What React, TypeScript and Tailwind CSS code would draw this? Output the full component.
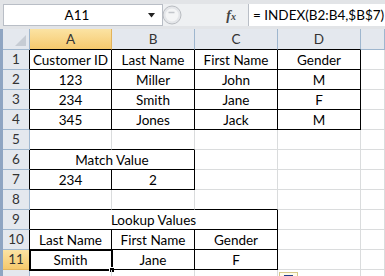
import React from 'react'

type Cell = { t?: string; span?: number }

const cols = ['A', 'B', 'C', 'D', '']

const rows: Cell[][] = [
  [{ t: 'Customer ID' }, { t: 'Last Name' }, { t: 'First Name' }, { t: 'Gender' }, {}],
  [{ t: '123' }, { t: 'Miller' }, { t: 'John' }, { t: 'M' }, {}],
  [{ t: '234' }, { t: 'Smith' }, { t: 'Jane' }, { t: 'F' }, {}],
  [{ t: '345' }, { t: 'Jones' }, { t: 'Jack' }, { t: 'M' }, {}],
  [{}, {}, {}, {}, {}],
  [{ t: 'Match Value', span: 2 }, {}, {}, {}],
  [{ t: '234' }, { t: '2' }, {}, {}, {}],
  [{}, {}, {}, {}, {}],
  [{ t: 'Lookup Values', span: 3 }, {}, {}],
  [{ t: 'Last Name' }, { t: 'First Name' }, { t: 'Gender' }, {}, {}],
  [{ t: 'Smith' }, { t: 'Jane' }, { t: 'F' }, {}, {}],
  [{}, {}, {}, {}, {}],
]

// cells that carry the black outline
function boxed(r: number, c: number) {
  if (r >= 1 && r <= 4 && c <= 3) return true
  if (r >= 6 && r <= 7 && c <= 1) return true
  if (r >= 9 && r <= 11 && c <= 2) return true
  return false
}

const font = { fontFamily: 'Lato, "Open Sans", sans-serif' }

function FormulaBar() {
  return (
    <div className="flex h-[29px] items-start bg-[#e2e4e7] pt-[4px]">
      <div className="ml-[3px] flex h-[22px] w-[160px] items-center border border-[#b9bec6] bg-white">
        <span className="flex-1 pl-[2px] text-center text-[13.5px] text-black">A11</span>
        <svg width="8" height="5" viewBox="0 0 8 5" className="mr-[6px]">
          <path d="M0 0h7L3.5 4.5z" fill="#222" />
        </svg>
      </div>
      <div className="flex h-[22px] w-[85px] items-center bg-[#eef0f2]">
        <svg width="20" height="22" viewBox="0 0 20 22" className="-ml-[1px]">
          <circle cx="10" cy="11" r="9" fill="#e4e6e9" stroke="#b9bcc1" />
          <circle cx="10" cy="11" r="6.5" fill="#f4f5f6" />
          <path d="M6.5 8.5h6" stroke="#c3c6cb" strokeWidth="1.5" />
        </svg>
        <span
          className="ml-auto mr-[12px] text-[14px] font-bold italic text-[#444]"
          style={{ fontFamily: '"Liberation Serif", serif' }}
        >
          f<span className="text-[10px]">x</span>
        </span>
      </div>
      <div className="flex h-[22px] flex-1 items-center border-l border-[#b9bec6] bg-white pl-[4px] text-[13.5px] text-black">
        = INDEX(B2:B4,$B$7)
      </div>
    </div>
  )
}

export default function App() {
  return (
    <div className="h-[276px] w-[385px] overflow-hidden bg-white" style={font}>
      <FormulaBar />
      <div className="flex">
        <div className="w-[3px] shrink-0 bg-[#8fa5c2]" />
        <div className="grid flex-1 grid-cols-[27px_82px_83px_83px_83px_1fr] auto-rows-[20px] [grid-template-rows:21px]">
          {/* corner */}
          <div className="flex items-end justify-end border-r border-b border-[#9eb6ce] bg-[#e4e8ee] pr-[3px] pb-[3px]">
            <svg width="11" height="11" viewBox="0 0 11 11">
              <path d="M11 0v11H0z" fill="#c6ccd4" />
            </svg>
          </div>
          {cols.map((c, i) => (
            <div
              key={'h' + i}
              className={
                'flex items-center justify-center border-r text-[13.5px] text-[#333] ' +
                (i === 0 ? 'border-[#e3b35a] bg-gradient-to-b from-[#fbe3a3] to-[#f6c96c] ' : 'border-[#9eb6ce] bg-[#e4e8ee] ') +
                (boxed(1, i) ? 'border-b border-b-black' : 'border-b border-b-[#9eb6ce]')
              }
            >
              {c}
            </div>
          ))}
          {rows.map((row, ri) => {
            const r = ri + 1
            let c = 0
            return (
              <React.Fragment key={r}>
                <div
                  className={
                    'flex items-center justify-center border-b text-[13.5px] text-[#333] ' +
                    (r === 11 ? 'border-b-[#e3b35a] bg-gradient-to-b from-[#fbe3a3] to-[#f6c96c] ' : 'border-b-[#9eb6ce] bg-[#e4e8ee] ') +
                    (boxed(r, 0) ? 'border-r border-r-black' : 'border-r border-r-[#9eb6ce]')
                  }
                >
                  {r < 12 ? r : ''}
                </div>
                {row.map((cell, k) => {
                  const span = cell.span ?? 1
                  const col = c
                  c += span
                  const rightBlack = boxed(r, col) || boxed(r, col + span)
                  const bottomBlack = boxed(r, col) || boxed(r + 1, col)
                  const sel = r === 11 && col === 0
                  return (
                    <div
                      key={k}
                      className={
                        'relative flex items-center justify-center border-r border-b pt-[1px] text-[13.5px] text-black ' +
                        (span === 2 ? 'col-span-2 ' : span === 3 ? 'col-span-3 ' : '') +
                        (rightBlack ? 'border-r-black ' : 'border-r-[#dadcdd] ') +
                        (bottomBlack ? 'border-b-black' : 'border-b-[#dadcdd]')
                      }
                    >
                      {cell.t}
                      {sel && (
                        <>
                          <div className="absolute -left-px -top-px -right-[2px] -bottom-[2px] border-2 border-black" />
                          <div className="absolute -bottom-[4px] -right-[4px] h-[6px] w-[6px] border border-white bg-black" />
                        </>
                      )}
                      {r === 12 && col === 3 && (
                        <div className="absolute left-[1px] top-[2px] flex h-[18px] w-[19px] justify-center border border-[#d7c98a] bg-[#fdfbe9] pt-[2px]">
                          <div className="h-[8px] w-[9px] border border-[#23408c] bg-[#3a5fb4]" />
                        </div>
                      )}
                    </div>
                  )
                })}
              </React.Fragment>
            )
          })}
        </div>
      </div>
    </div>
  )
}
